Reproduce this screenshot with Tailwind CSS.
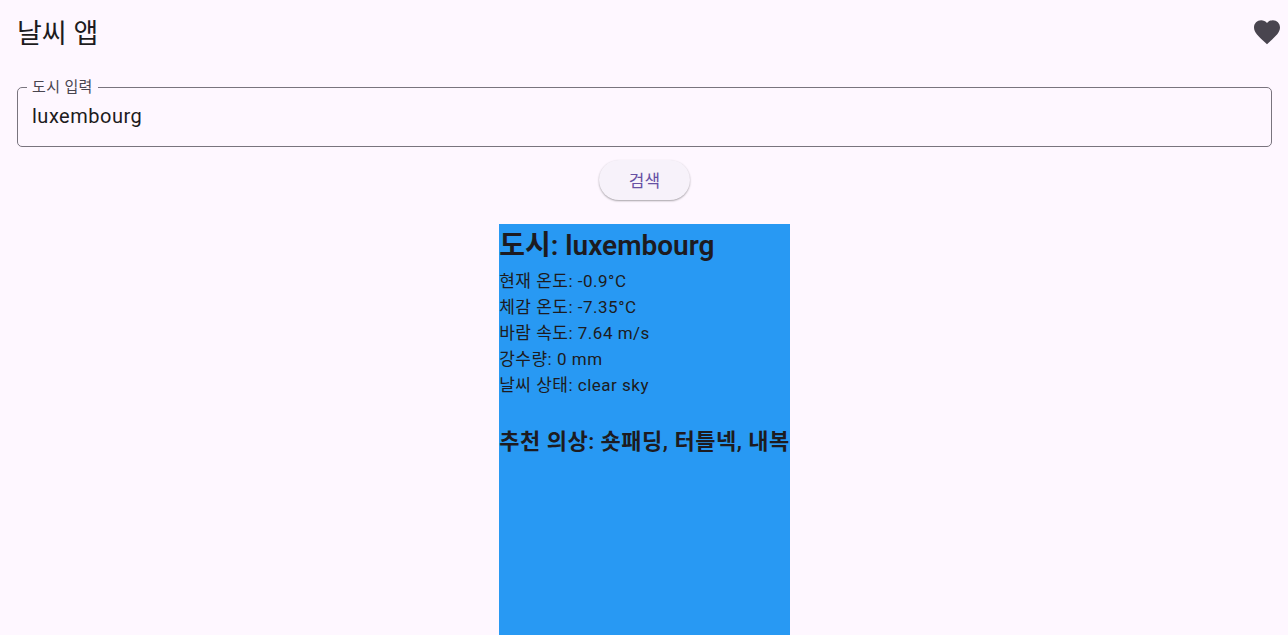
<!DOCTYPE html>
<html lang="ko">
<head>
<meta charset="utf-8">
<meta name="viewport" content="width=device-width, initial-scale=1">
<title>날씨 앱</title>
<script src="https://cdn.jsdelivr.net/npm/@tailwindcss/browser@4"></script>
</head>
<body class="flex h-screen flex-col overflow-hidden bg-[#fef7ff] font-['Roboto','Noto_Sans_CJK_KR',sans-serif] text-[#1d1b20]">
<header class="flex h-16 shrink-0 items-center justify-between pr-2 pl-[17px]">
  <h1 class="pt-1 text-[27px] leading-9">날씨 앱</h1>
  <button type="button" aria-label="즐겨찾기" class="text-[#49454f]">
    <svg class="size-[26px]" viewBox="2 2 20 20" fill="currentColor"><path d="M12 21.35l-1.45-1.32C5.4 15.36 2 12.28 2 8.5 2 5.42 4.42 3 7.5 3c1.74 0 3.41.81 4.5 2.09C13.09 3.81 14.76 3 16.5 3 19.58 3 22 5.42 22 8.5c0 3.78-3.4 6.86-8.55 11.54L12 21.35z"/></svg>
  </button>
</header>
<main class="flex min-h-0 grow flex-col items-center pt-[11px] pr-4 pl-[17px]">
  <fieldset class="h-[72px] w-full shrink-0 rounded-[5px] border border-[#79747e] px-[9px]">
    <legend class="px-[5px] text-[15px] leading-6 tracking-wide text-[#49454f]"><label for="city">도시 입력</label></legend>
    <input id="city" type="text" value="luxembourg" class="block w-full px-[5px] text-xl leading-[34px] tracking-wide outline-none">
  </fieldset>
  <button type="button" class="mt-[13px] h-10 shrink-0 rounded-full bg-[#f7f2fa] px-[30px] pt-1 text-[17px] text-[#6750a4] shadow-[0_1px_2px_rgb(0_0_0/0.35)]">검색</button>
  <section class="mt-6 grow bg-[#2899f3]">
    <h2 class="text-[28px] leading-11 font-semibold">도시: luxembourg</h2>
    <div class="text-[17px] leading-[26px] tracking-[0.5px]">
      <p>현재 온도: -0.9°C</p>
      <p>체감 온도: -7.35°C</p>
      <p>바람 속도: 7.64 m/s</p>
      <p>강수량: 0 mm</p>
      <p>날씨 상태: clear sky</p>
    </div>
    <p class="mt-[26px] text-[22px] leading-9 font-semibold tracking-[0.5px]">추천 의상: 숏패딩, 터틀넥, 내복</p>
  </section>
</main>
</body>
</html>
